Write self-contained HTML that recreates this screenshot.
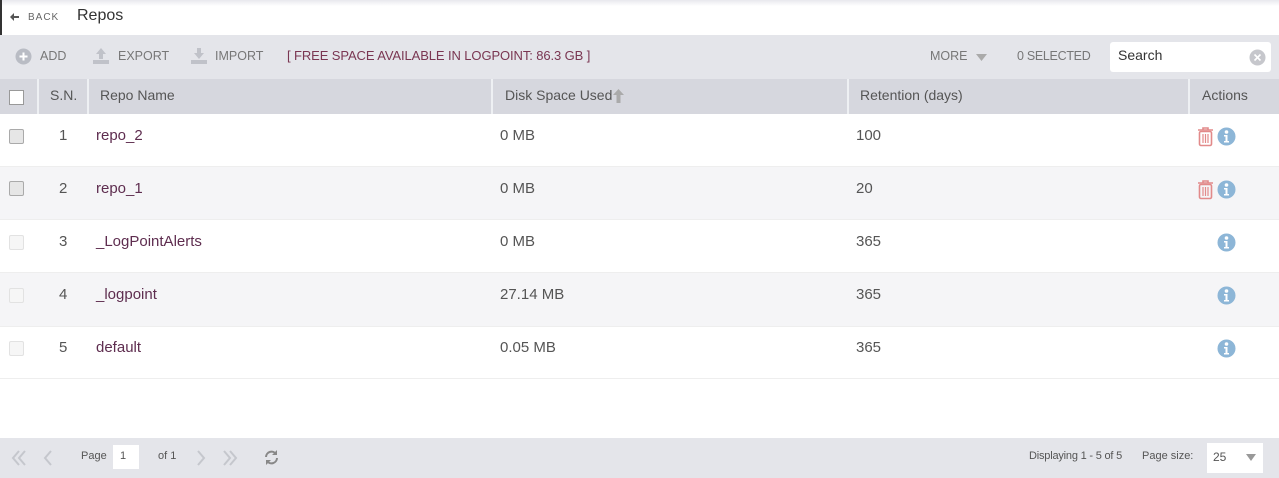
<!DOCTYPE html>
<html><head><style>
*{box-sizing:border-box;margin:0;padding:0}
body{width:1279px;height:478px;background:#fff;font-family:"Liberation Sans",sans-serif;position:relative;overflow:hidden;color:#555}
.abs{position:absolute}
.top{left:0;top:0;width:1279px;height:35px;background:linear-gradient(#e8e8ee,#fff 6px);border-left:2px solid #333}
.tb{left:0;top:35px;width:1279px;height:44px;background:#e4e5ea;font-size:12.5px;color:#777}
.hd{left:0;top:79px;width:1279px;height:35px;background:#d6d7de;font-size:14px;color:#555}
.row{left:0;width:1279px;font-size:15px;border-bottom:1px solid #eee}
.cb{width:15px;height:15px;border:1px solid #aaa;background:#e6e6e6;border-radius:2px}
.cbl{border-color:#e2e2e2;background:#f6f6f6}
.name{color:#5e2d4f}
.ft{left:0;top:438px;width:1279px;height:40px;background:#e4e5ea;font-size:11px;color:#555}
.sep{top:0;width:2px;height:35px;background:#eef0f3}
</style></head><body>
<div class="abs top">
 <svg class="abs" style="left:8px;top:13px" width="9" height="8"><path d="M0 4l4-4v3h5v2H4v3z" fill="#555"/></svg>
 <span class="abs" style="left:26px;top:12px;font-size:10px;color:#666;letter-spacing:1px">BACK</span>
 <span class="abs" style="left:75px;top:7px;font-size:16px;color:#333">Repos</span>
</div>
<div class="abs tb">
 <svg class="abs" style="left:15px;top:13px" width="17" height="17"><circle cx="8.5" cy="8.5" r="8" fill="#b9bcc4"/><path d="M8.5 4.5v8M4.5 8.5h8" stroke="#fff" stroke-width="2"/></svg>
 <span class="abs" style="left:40px;top:14px">ADD</span>
 <svg class="abs" style="left:92px;top:12px" width="18" height="18"><path d="M9 1l5 6h-3v5H7V7H4z" fill="#c0c2c9"/><rect x="1" y="13" width="16" height="4" fill="#c0c2c9"/></svg>
 <span class="abs" style="left:118px;top:14px">EXPORT</span>
 <svg class="abs" style="left:190px;top:12px" width="18" height="18"><path d="M9 12l5-6h-3V1H7v5H4z" fill="#c0c2c9"/><rect x="1" y="13" width="16" height="4" fill="#c0c2c9"/></svg>
 <span class="abs" style="left:215px;top:14px">IMPORT</span>
 <span class="abs" style="left:287px;top:13px;color:#7a3652;font-size:13px;letter-spacing:-0.1px">[ FREE SPACE AVAILABLE IN LOGPOINT: 86.3 GB ]</span>
 <span class="abs" style="left:930px;top:14px">MORE</span>
 <svg class="abs" style="left:976px;top:19px" width="11" height="7"><path d="M0 0h11L5.5 7z" fill="#aaa"/></svg>
 <span class="abs" style="left:1017px;top:14px;letter-spacing:-0.3px">0 SELECTED</span>
 <div class="abs" style="left:1110px;top:7px;width:161px;height:30px;background:#fff;border-radius:3px"></div>
 <span class="abs" style="left:1118px;top:12px;font-size:14px;color:#333">Search</span>
 <svg class="abs" style="left:1249px;top:14px" width="17" height="17"><circle cx="8.5" cy="8.5" r="8" fill="#c6c7cc"/><path d="M5.5 5.5l6 6M11.5 5.5l-6 6" stroke="#fff" stroke-width="1.6"/></svg>
</div>
<div class="abs hd">
 <div class="abs" style="left:9px;top:11px;width:15px;height:15px;background:#fff;border:1px solid #999"></div>
 <div class="abs sep" style="left:37px"></div>
 <span class="abs" style="left:50px;top:8px">S.N.</span>
 <div class="abs sep" style="left:87px"></div>
 <span class="abs" style="left:100px;top:8px">Repo Name</span>
 <div class="abs sep" style="left:491px"></div>
 <span class="abs" style="left:505px;top:8px">Disk Space Used</span>
 <svg class="abs" style="left:613px;top:10px" width="11" height="14"><path d="M5.5 0L11 6H7.5v8h-4V6H0z" fill="#aaa"/></svg>
 <div class="abs sep" style="left:847px"></div>
 <span class="abs" style="left:860px;top:8px">Retention (days)</span>
 <div class="abs sep" style="left:1188px"></div>
 <span class="abs" style="left:1202px;top:8px">Actions</span>
</div>

<div class="abs row" style="top:114px;height:53px;background:#fff">
 <div class="abs cb" style="left:9px;top:15px"></div>
 <span class="abs" style="left:59px;top:13px">1</span>
 <span class="abs name" style="left:96px;top:13px">repo_2</span>
 <span class="abs" style="left:500px;top:13px">0 MB</span>
 <span class="abs" style="left:856px;top:13px">100</span>
</div>
<div class="abs row" style="top:167px;height:53px;background:#f5f5f7">
 <div class="abs cb" style="left:9px;top:14px"></div>
 <span class="abs" style="left:59px;top:13px">2</span>
 <span class="abs name" style="left:96px;top:13px">repo_1</span>
 <span class="abs" style="left:500px;top:13px">0 MB</span>
 <span class="abs" style="left:856px;top:13px">20</span>
</div>
<div class="abs row" style="top:220px;height:53px;background:#fff">
 <div class="abs cb cbl" style="left:9px;top:15px"></div>
 <span class="abs" style="left:59px;top:13px">3</span>
 <span class="abs name" style="left:96px;top:13px">_LogPointAlerts</span>
 <span class="abs" style="left:500px;top:13px">0 MB</span>
 <span class="abs" style="left:856px;top:13px">365</span>
</div>
<div class="abs row" style="top:273px;height:54px;background:#f5f5f7">
 <div class="abs cb cbl" style="left:9px;top:15px"></div>
 <span class="abs" style="left:59px;top:13px">4</span>
 <span class="abs name" style="left:96px;top:13px">_logpoint</span>
 <span class="abs" style="left:500px;top:13px">27.14 MB</span>
 <span class="abs" style="left:856px;top:13px">365</span>
</div>
<div class="abs row" style="top:327px;height:52px;background:#fff">
 <div class="abs cb cbl" style="left:9px;top:14px"></div>
 <span class="abs" style="left:59px;top:12px">5</span>
 <span class="abs name" style="left:96px;top:12px">default</span>
 <span class="abs" style="left:500px;top:12px">0.05 MB</span>
 <span class="abs" style="left:856px;top:12px">365</span>
</div>

<svg class="abs" style="left:1197px;top:127px" width="17" height="20"><path d="M1 3h15M6 3V1h5v2" stroke="#e28a8a" stroke-width="1.6" fill="none"/><rect x="2.5" y="4.5" width="12" height="14" rx="1.5" fill="none" stroke="#e28a8a" stroke-width="1.6"/><path d="M6 7v9M8.5 7v9M11 7v9" stroke="#e28a8a" stroke-width="1.2"/></svg>
<svg class="abs" style="left:1197px;top:180px" width="17" height="20"><path d="M1 3h15M6 3V1h5v2" stroke="#e28a8a" stroke-width="1.6" fill="none"/><rect x="2.5" y="4.5" width="12" height="14" rx="1.5" fill="none" stroke="#e28a8a" stroke-width="1.6"/><path d="M6 7v9M8.5 7v9M11 7v9" stroke="#e28a8a" stroke-width="1.2"/></svg>
<svg class="abs" style="left:1217px;top:127px" width="19" height="19"><circle cx="9.5" cy="9.5" r="9" fill="#8db6d7"/><circle cx="9.5" cy="5" r="1.8" fill="#fff"/><path d="M7 8h3.5v6H12v1.5H7V14h1.5v-4.5H7z" fill="#fff"/></svg>
<svg class="abs" style="left:1217px;top:180px" width="19" height="19"><circle cx="9.5" cy="9.5" r="9" fill="#8db6d7"/><circle cx="9.5" cy="5" r="1.8" fill="#fff"/><path d="M7 8h3.5v6H12v1.5H7V14h1.5v-4.5H7z" fill="#fff"/></svg>
<svg class="abs" style="left:1217px;top:233px" width="19" height="19"><circle cx="9.5" cy="9.5" r="9" fill="#8db6d7"/><circle cx="9.5" cy="5" r="1.8" fill="#fff"/><path d="M7 8h3.5v6H12v1.5H7V14h1.5v-4.5H7z" fill="#fff"/></svg>
<svg class="abs" style="left:1217px;top:286px" width="19" height="19"><circle cx="9.5" cy="9.5" r="9" fill="#8db6d7"/><circle cx="9.5" cy="5" r="1.8" fill="#fff"/><path d="M7 8h3.5v6H12v1.5H7V14h1.5v-4.5H7z" fill="#fff"/></svg>
<svg class="abs" style="left:1217px;top:339px" width="19" height="19"><circle cx="9.5" cy="9.5" r="9" fill="#8db6d7"/><circle cx="9.5" cy="5" r="1.8" fill="#fff"/><path d="M7 8h3.5v6H12v1.5H7V14h1.5v-4.5H7z" fill="#fff"/></svg>

<div class="abs ft">
 <svg class="abs" style="left:11px;top:12px" width="60" height="16"><path d="M8 1L2 8l6 7M14 1L8 8l6 7M40 1l-6 7 6 7" stroke="#c5c7cd" stroke-width="2" fill="none"/></svg>
 <span class="abs" style="left:81px;top:12px">Page</span>
 <div class="abs" style="left:113px;top:7px;width:26px;height:24px;background:#fff"></div>
 <span class="abs" style="left:120px;top:12px">1</span>
 <span class="abs" style="left:158px;top:12px">of 1</span>
 <svg class="abs" style="left:196px;top:12px" width="50" height="16"><path d="M2 1l6 7-6 7M28 1l6 7-6 7M34 1l6 7-6 7" stroke="#c5c7cd" stroke-width="2" fill="none"/></svg>
 <svg class="abs" style="left:264px;top:12px" width="15" height="15"><path d="M12 4A5.5 5.5 0 0 0 2 7M3 11a5.5 5.5 0 0 0 10-3" stroke="#888" stroke-width="2" fill="none"/><path d="M13 0v5H8zM2 15v-5h5z" fill="#888"/></svg>
 <span class="abs" style="left:1029px;top:12px;letter-spacing:-0.2px">Displaying 1 - 5 of 5</span>
 <span class="abs" style="left:1142px;top:12px">Page size:</span>
 <div class="abs" style="left:1207px;top:5px;width:56px;height:30px;background:#fff"></div>
 <span class="abs" style="left:1213px;top:12px;font-size:12px">25</span>
 <svg class="abs" style="left:1246px;top:16px" width="10" height="7"><path d="M0 0h10L5 7z" fill="#999"/></svg>
</div>
</body></html>
